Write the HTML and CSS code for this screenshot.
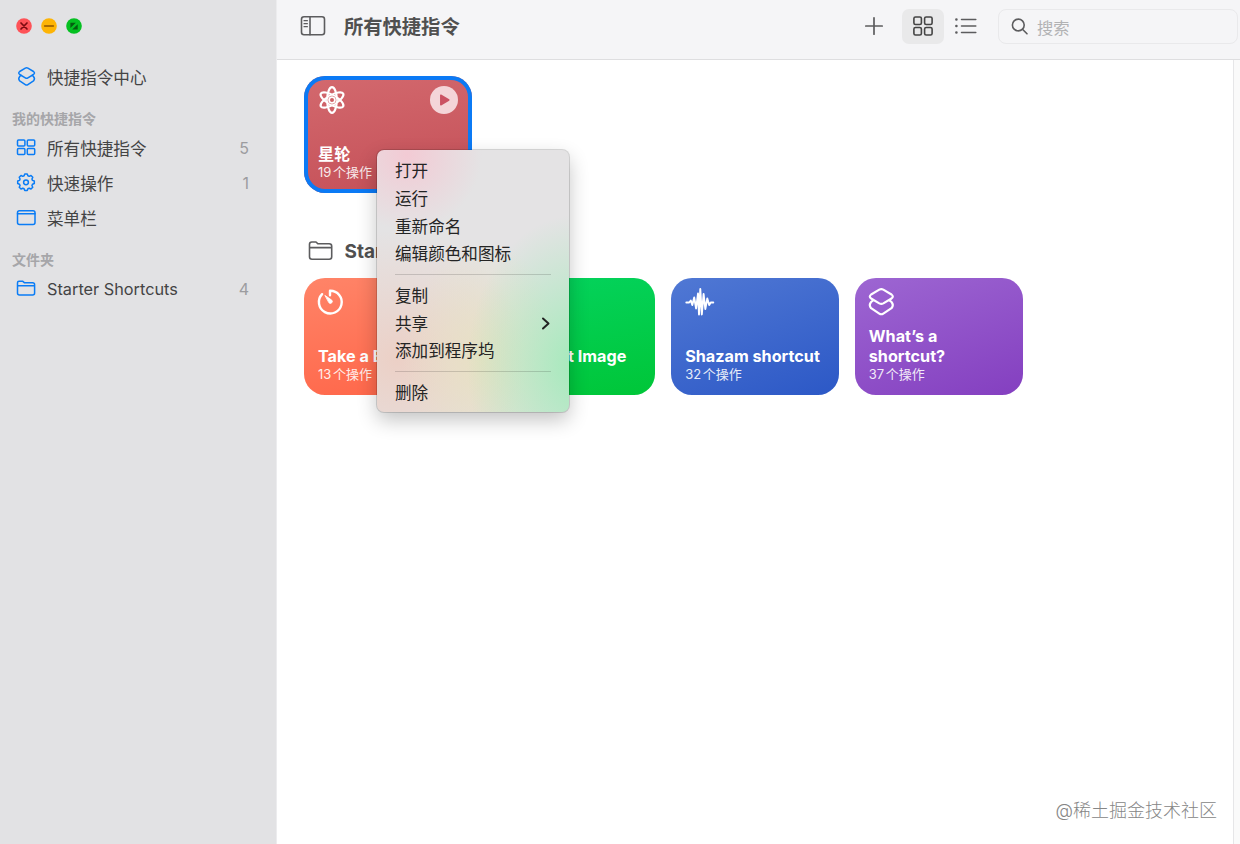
FILE: index.html
```html
<!DOCTYPE html>
<html lang="zh-CN">
<head>
  <meta charset="UTF-8" />
  <meta name="viewport" content="width=device-width, initial-scale=1.0" />
  <title>快捷指令</title>
  <link rel="stylesheet" href="styles.css">
</head>
<body>
  <div class="window">
    <aside class="sidebar">
      <div class="lights">
        <svg width="16" height="16" viewBox="0 0 16 16"><circle cx="8" cy="8" r="7.8" fill="#fe5257"/><path d="M5 5l6 6M11 5l-6 6" stroke="#7d0a10" stroke-width="1.7" stroke-linecap="round"/></svg>
        <svg width="16" height="16" viewBox="0 0 16 16"><circle cx="8" cy="8" r="7.8" fill="#fdb405"/><path d="M3.6 8h8.8" stroke="#8f5400" stroke-width="1.5" stroke-linecap="round"/></svg>
        <svg width="16" height="16" viewBox="0 0 16 16"><circle cx="8" cy="8" r="7.8" fill="#05c021"/><path d="M4.400 10V4.800H9.800zM11.700 6.200v5.200H6.200z" fill="#045c10"/></svg>
      </div>

      <nav>
        <a class="item center">
          <svg class="icon" width="20" height="22" viewBox="0 0 20 22"><path d="M9.300 2.200Q10.600 1.500 11.900 2.200L17.500 5.500Q19.400 7 17.500 8.500L11.900 11.900Q10.600 12.700 9.300 11.900L3.700 8.500Q1.800 7 3.700 5.500Z"/><path d="M5 9.400L3.700 10.500Q1.800 12.900 3.700 14.900L9.300 18.600Q10.600 19.500 11.900 18.600L17.500 14.900Q19.400 12.900 17.500 10.500L16.200 9.400"/></svg>
          <span>快捷指令中心</span>
        </a>

        <h2>我的快捷指令</h2>
        <a class="item">
          <svg class="icon" width="20" height="20" viewBox="0 0 20 20"><rect x="1.500" y="2" width="7.400" height="6.100" rx="1"/><rect x="11.300" y="2" width="7.400" height="6.100" rx="1"/><rect x="1.500" y="10.400" width="7.400" height="6.100" rx="1"/><rect x="11.300" y="10.400" width="7.400" height="6.100" rx="1"/></svg>
          <span>所有快捷指令</span><b>5</b>
        </a>
        <a class="item">
          <svg class="icon" width="20" height="20" viewBox="-10 -9.300 20 20"><path d="M6.500-1.900L8.300-1.250 8.300 1.250 6.500 1.900 5.940 3.250 6.750 4.980 4.980 6.750 3.250 5.940 1.900 6.500 1.250 8.300-1.250 8.300-1.900 6.500-3.250 5.940-4.980 6.750-6.750 4.980-5.940 3.250-6.500 1.900-8.300 1.250-8.300-1.250-6.500-1.900-5.940-3.250-6.750-4.980-4.980-6.750-3.250-5.940-1.900-6.500-1.250-8.300 1.250-8.300 1.900-6.500 3.250-5.940 4.980-6.750 6.750-4.980 5.940-3.250Z"/><circle r="2.400"/></svg>
          <span>快速操作</span><b>1</b>
        </a>
        <a class="item">
          <svg class="icon" width="20" height="20" viewBox="0 0 20 20"><rect x="1.500" y="2.700" width="17.500" height="13.800" rx="2"/><path d="M1.500 5.700h17.500"/></svg>
          <span>菜单栏</span>
        </a>

        <h2>文件夹</h2>
        <a class="item">
          <svg class="icon" width="20" height="20" viewBox="0 0 20 20"><path d="M1.500 6.200V3.700q0-1.500 1.500-1.500h3.500l1.800 1.500h8.300q2 0 2 2v8.200q0 2-2 2H3.500q-2 0-2-2zM1.500 6.700h17.100"/></svg>
          <span class="latin">Starter Shortcuts</span><b>4</b>
        </a>
      </nav>
    </aside>

    <main>
      <header class="toolbar">
        <svg class="line" width="26" height="22" viewBox="0 0 26 22"><rect x="1.500" y="1.800" width="23" height="18" rx="2.500"/><path d="M10 1.800v18"/><path d="M4 5.700h3.400M4 8.700h3.400M4 11.700h3.400" stroke-width="1.200"/></svg>
        <h1>所有快捷指令</h1>
        <div class="tools">
          <button><svg class="line" width="20" height="20" viewBox="0 0 20 20"><path d="M10 1.800v16.400M1.800 10h16.400" stroke-width="1.700"/></svg></button>
          <button class="active"><svg class="line" width="22" height="22" viewBox="0 0 22 22"><rect x="1.900" y="2" width="7.500" height="7.500" rx="1.600"/><rect x="12.600" y="2" width="7.500" height="7.500" rx="1.600"/><rect x="1.900" y="12.500" width="7.500" height="7.500" rx="1.600"/><rect x="12.600" y="12.500" width="7.500" height="7.500" rx="1.600"/></svg></button>
          <button><svg class="line" width="24" height="20" viewBox="0 0 24 20"><path d="M7.500 3.500h14.300M7.500 10h14.300M7.500 16.500h14.300" stroke-width="1.500"/><path d="M2.400 3.500h.01M2.400 10h.01M2.400 16.500h.01" stroke-width="2.600"/></svg></button>
          <div class="search">
            <svg class="line" width="18" height="18" viewBox="0 0 18 18"><circle cx="7.300" cy="8" r="5.900"/><path d="M11.700 12.500l4.300 4.300"/></svg>
            <span>搜索</span>
          </div>
        </div>
      </header>

      <section class="content">
        <div class="cards">
          <article class="card red selected">
            <svg class="glyph" width="28" height="30" viewBox="-14 -15 28 30"><ellipse rx="4.800" ry="12.900"/><ellipse rx="4.800" ry="12.900" transform="rotate(60)"/><ellipse rx="4.800" ry="12.900" transform="rotate(-60)"/><circle r="5" fill="#fff" stroke="none"/><circle r="4.300" fill="#cf6065" stroke="none"/><circle r="2.900" stroke-width="1.800"/></svg>
            <svg class="play" width="28" height="28" viewBox="0 0 28 28"><circle cx="14" cy="14" r="14" fill="#f4d5d8"/><path d="M10.800 9.200v9.600l8-4.800z" fill="#cb5262" stroke="#cb5262" stroke-width="1.500" stroke-linejoin="round"/></svg>
            <h3>星轮</h3>
            <p>19 个操作</p>
          </article>
        </div>

        <div class="folder">
          <svg class="line" width="26" height="22" viewBox="0 0 26 22"><path d="M1.500 6.500V4.300q0-2.300 2.300-2.300h4.200l2 1.800h11.200q2.500 0 2.500 2.500v10.500q0 2.500-2.500 2.500H4q-2.500 0-2.500-2.500zM1.500 7.600h22.200"/></svg>
          <h2>Starter Shortcuts</h2>
        </div>

        <div class="cards">
          <article class="card orange">
            <svg class="glyph" width="28" height="30" viewBox="-14 -15 28 30"><path d="M-2-6.700V-11.300A11.400 11.400 0 1 1-9.900-7.800" stroke-width="2.400"/><path d="M-6.800-6.400L-.3-1.900A1.900 1.900 0 0 1-2.900 .9Z" fill="#fff" stroke-width=".8"/></svg>
            <h3>Take a Break</h3>
            <p>13 个操作</p>
          </article>
          <article class="card green">
            <h3 class="right">Text Last Image</h3>
            <p></p>
          </article>
          <article class="card blue">
            <svg class="glyph" width="30" height="30" viewBox="0 0 30 30"><path d="M1.300 15.500H4.200l1.600-2 1.500 4.500L9.200 10.500l1.900 11L13 6.500l1 21L15.300 2l1.500 25.500L18.600 7l1.700 15 2-10.500 1.900 6.500 1.500-2.500h2.600" stroke-width="1.900"/></svg>
            <h3>Shazam shortcut</h3>
            <p>32 个操作</p>
          </article>
          <article class="card purple">
            <svg class="glyph" width="28" height="30" viewBox="0 0 28 30"><path d="M10.300 2.600Q12.300 1.500 14.300 2.600L22.500 7.500Q25.100 9.500 22.500 11.500L14.300 16.400Q12.300 17.500 10.300 16.400L2.100 11.500Q-.5 9.500 2.100 7.500Z"/><path d="M3.800 13.700L2.100 15Q-.5 18.200 2.100 21.200L10.300 26.600Q12.300 27.900 14.300 26.600L22.500 21.200Q25.100 18.200 22.500 15L20.800 13.700"/></svg>
            <h3>What’s a shortcut?</h3>
            <p>37 个操作</p>
          </article>
        </div>
      </section>
      <div class="scrollbar"></div>
    </main>

    <ul class="menu">
      <li>打开</li>
      <li>运行</li>
      <li>重新命名</li>
      <li>编辑颜色和图标</li>
      <li class="sep"></li>
      <li>复制</li>
      <li>共享 <svg width="10" height="14" viewBox="0 0 10 14"><path d="M2 2.500l5.500 5L2 12.500" fill="none" stroke="#222" stroke-width="2" stroke-linecap="round" stroke-linejoin="round"/></svg></li>
      <li>添加到程序坞</li>
      <li class="sep"></li>
      <li>删除</li>
    </ul>

    <div class="watermark">@稀土掘金技术社区</div>
  </div>
</body>
</html>
```
FILE: styles.css
```css
* {
  margin: 0;
  padding: 0;
  box-sizing: border-box;
}

body {
  font-family: Inter, "Noto Sans CJK SC", sans-serif;
  color: #444;
  background: #fff;
  overflow: hidden;
}

svg {
  display: block;
  flex: none;
  overflow: visible;
}

.window {
  position: relative;
  display: flex;
  width: 1240px;
  height: 844px;
}

/* sidebar */
.sidebar {
  width: 277px;
  background: #e2e2e4;
  border-right: 1px solid #ececee;
}

.lights {
  display: flex;
  gap: 9.3px;
  padding: 18px 0 0 15.7px;
  height: 60px;
}

.item {
  display: flex;
  align-items: center;
  height: 35px;
  padding: 0 27px 0 16px;
  font-size: 16.6px;
}

.item.center {
  height: 34px;
}

.item span {
  flex: 1;
  margin-left: 11px;
}

.item .latin {
  font-size: 16.3px;
}

.item b {
  font-weight: 400;
  font-size: 16px;
  color: #9c9c9f;
}

.icon {
  fill: none;
  stroke: #0a7cf5;
  stroke-width: 1.5;
  stroke-linejoin: round;
  stroke-linecap: round;
}

.sidebar h2 {
  height: 36px;
  padding: 7.5px 12px 0;
  font-size: 14px;
  line-height: 34px;
  font-weight: 600;
  color: #a6a6a9;
}

/* toolbar */
main {
  position: relative;
  flex: 1;
}

.toolbar {
  display: flex;
  align-items: center;
  height: 60px;
  padding: 0 2px 7px 23px;
  background: #f5f5f7;
  border-bottom: 1px solid #dedee0;
}

.line {
  fill: none;
  stroke: #5c5c5e;
  stroke-width: 1.6;
  stroke-linecap: round;
  stroke-linejoin: round;
}

.toolbar h1 {
  margin-left: 18px;
  padding-bottom: 1px;
  font-size: 19.3px;
  font-weight: 700;
  color: #505050;
}

.tools {
  display: flex;
  align-items: center;
  margin-left: auto;
}

.tools button {
  display: grid;
  place-items: center;
  width: 42px;
  height: 35px;
  margin-right: 1px;
  border: none;
  border-radius: 7px;
  background: none;
}

.tools button:first-child {
  margin-right: 7px;
}

.tools .active {
  background: #e9e9ea;
}

.active .line {
  stroke: #444;
}

.search {
  display: flex;
  align-items: center;
  width: 240px;
  height: 35px;
  margin-left: 10px;
  padding-left: 12px;
  border: 1px solid #e9e9eb;
  border-radius: 8px;
  font-size: 16.3px;
  color: #b2b2b4;
}

.search span {
  margin-left: 8px;
  padding-top: 1px;
}

/* shortcuts */
.content {
  padding: 16px 27px;
}

.cards {
  display: flex;
  gap: 15.8px;
}

.card {
  position: relative;
  display: flex;
  flex-direction: column;
  width: 167.8px;
  height: 117px;
  padding: 9px 14px 13px;
  border-radius: 21px;
  color: #fff;
}

.card h3 {
  margin-top: auto;
  font-size: 16.2px;
  line-height: 20px;
  font-weight: 700;
  white-space: nowrap;
}

.card p {
  height: 16px;
  font-size: 13px;
  line-height: 16px;
  word-spacing: -2px;
  opacity: .88;
}

.card .right {
  align-self: flex-end;
  margin-right: 15px;
}

.glyph {
  fill: none;
  stroke: #fff;
  stroke-width: 2.2;
  stroke-linecap: round;
  stroke-linejoin: round;
}

.play {
  position: absolute;
  top: 10px;
  right: 14px;
}

.red { background: linear-gradient(170deg, #d3696e, #c44f57); }
.orange { background: linear-gradient(170deg, #ff8468, #ff6548); }
.green { background: linear-gradient(170deg, #04d35e, #00c638); }
.blue { background: linear-gradient(160deg, #5078d4, #2c58c6); }
.purple { background: linear-gradient(160deg, #9d66d2, #843fc0); }

.purple h3 {
  width: 100px;
  white-space: normal;
}

.selected {
  box-shadow: inset 0 0 0 4px #0b7af5;
}

.folder {
  display: flex;
  align-items: center;
  height: 85px;
  padding: 31px 0 0 4px;
}

.folder h2 {
  margin-left: 10.5px;
  font-size: 19px;
  font-weight: 700;
  color: #505050;
}

.scrollbar {
  position: absolute;
  top: 60px;
  right: 0;
  bottom: 0;
  width: 7px;
  background: #fafafa;
  border-left: 1px solid #e6e6e8;
}

/* context menu */
.menu {
  position: absolute;
  left: 377px;
  top: 150px;
  width: 192px;
  height: 262px;
  padding: 6.4px 18px;
  list-style: none;
  font-size: 16.6px;
  color: #242424;
  border-radius: 7px;
  background:
    radial-gradient(circle at 30px 5px, rgba(246, 196, 208, .8), rgba(246, 196, 208, 0) 75px),
    radial-gradient(ellipse 110px 150px at 200px 215px, rgba(164, 234, 186, 1), rgba(176, 232, 195, 0)),
    radial-gradient(ellipse 80px 120px at 105px 210px, rgba(232, 226, 190, .8), rgba(232, 226, 190, 0)),
    radial-gradient(ellipse 130px 130px at 20px 210px, rgba(236, 208, 198, 1), rgba(236, 208, 198, 0)),
    #e4e3e4;
  box-shadow: 0 0 0 1px rgba(0, 0, 0, .14), 0 8px 20px rgba(0, 0, 0, .24);
}

.menu li {
  display: flex;
  align-items: center;
  justify-content: space-between;
  height: 27.7px;
}

.menu .sep {
  height: 14px;
}

.menu .sep::before {
  content: "";
  flex: 1;
  height: 1px;
  background: rgba(0, 0, 0, .15);
}

.watermark {
  position: absolute;
  right: 23px;
  bottom: 22px;
  font-size: 18px;
  font-weight: 300;
  color: #868686;
}
```
